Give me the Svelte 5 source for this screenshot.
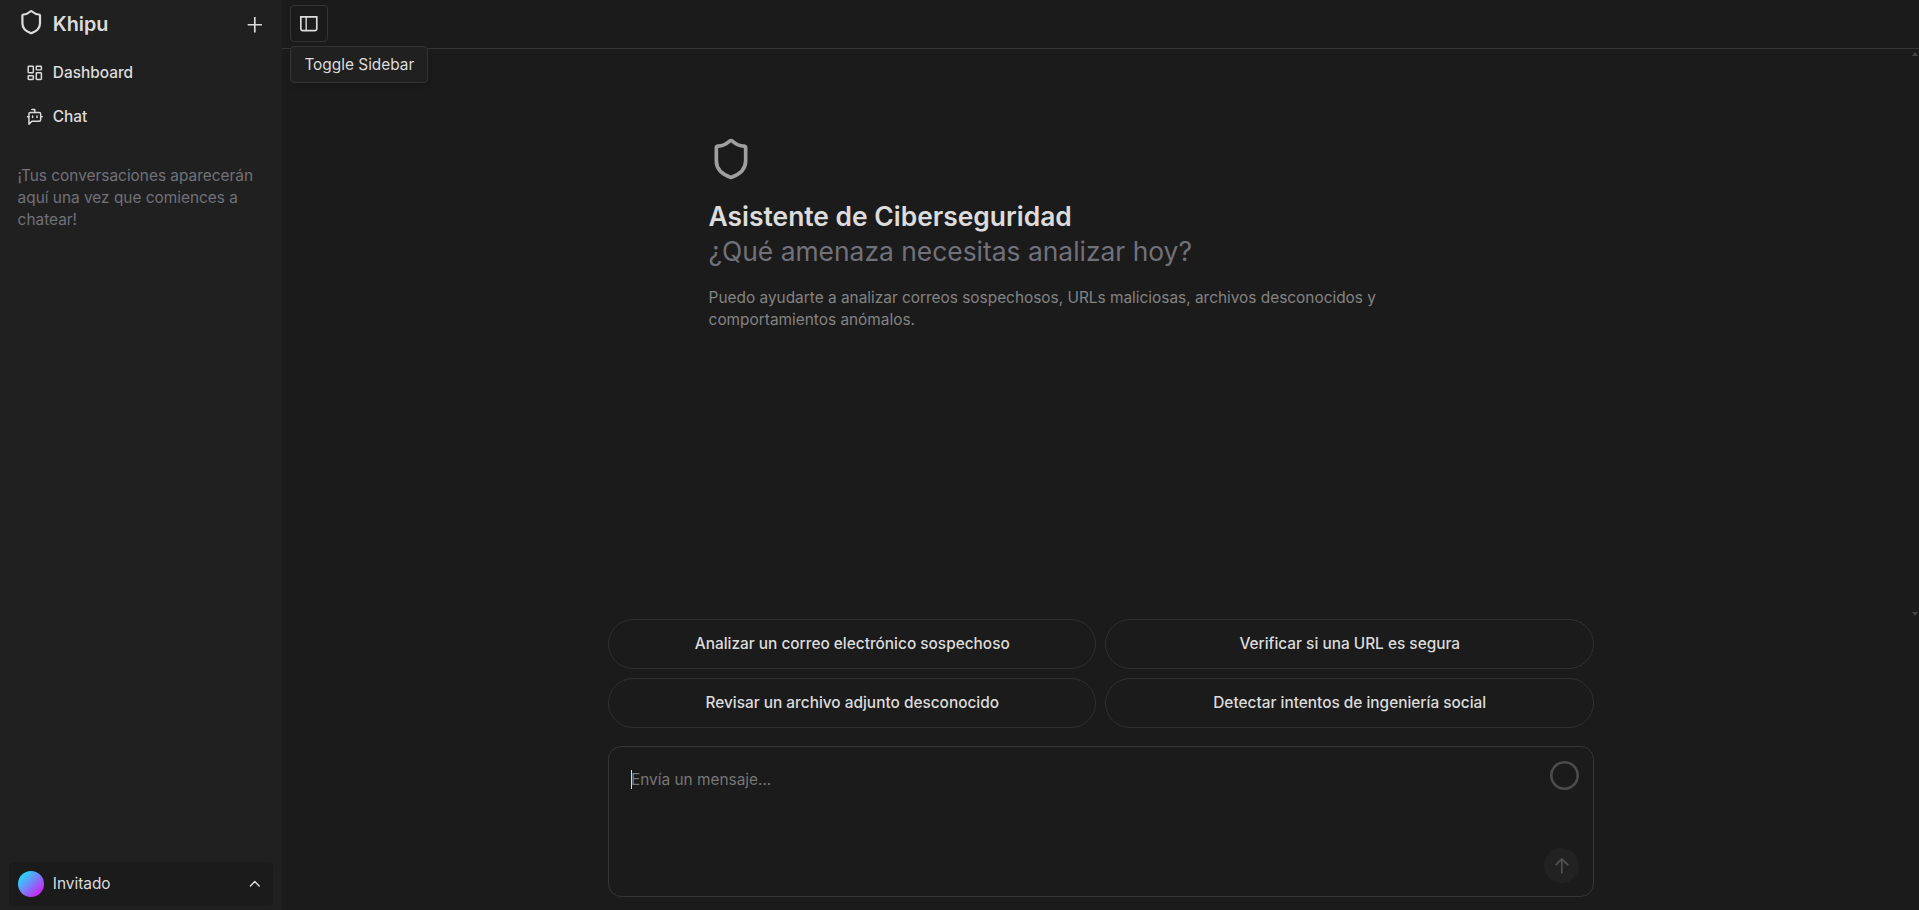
<script>
  const suggestions = [
    'Analizar un correo electrónico sospechoso',
    'Verificar si una URL es segura',
    'Revisar un archivo adjunto desconocido',
    'Detectar intentos de ingeniería social'
  ];
</script>

{#snippet shield()}
  <svg class="shield" viewBox="0 0 24 24" fill="none" stroke="currentColor" stroke-width="2" stroke-linecap="round" stroke-linejoin="round" aria-hidden="true">
    <path d="M20 13c0 5-3.5 7.5-7.66 8.95a1 1 0 0 1-.67-.01C7.5 20.5 4 18 4 13V6a1 1 0 0 1 1-1c2 0 4.5-1.2 6.24-2.72a1.17 1.17 0 0 1 1.52 0C14.51 3.81 17 5 19 5a1 1 0 0 1 1 1z" />
  </svg>
{/snippet}

<div class="layout">
  <aside class="sidebar">
    <div class="brand-row">
      <div class="brand">{@render shield()}<span>Khipu</span></div>
      <button class="plus" aria-label="Nuevo chat">
        <svg class="icon" viewBox="0 0 16 16" fill="currentColor"><path d="M8.75 1H7.25V7.25H1.5V8.75H7.25V15H8.75V8.75H14.5V7.25H8.75V1Z" /></svg>
      </button>
    </div>
    <nav>
      <a href="#dashboard">
        <svg class="icon line" viewBox="0 0 24 24"><rect width="7" height="9" x="3" y="3" rx="1" /><rect width="7" height="5" x="14" y="3" rx="1" /><rect width="7" height="9" x="14" y="12" rx="1" /><rect width="7" height="5" x="3" y="16" rx="1" /></svg>
        <span>Dashboard</span>
      </a>
      <a href="#chat">
        <svg class="icon line" viewBox="0 0 24 24"><path d="M12 6V2H8" /><path d="m8 18-4 4V8a2 2 0 0 1 2-2h12a2 2 0 0 1 2 2v8a2 2 0 0 1-2 2Z" /><path d="M2 12h2M9 11v2M15 11v2M20 12h2" /></svg>
        <span>Chat</span>
      </a>
    </nav>
    <p class="history">¡Tus conversaciones aparecerán aquí una vez que comiences a chatear!</p>
    <button class="user">
      <span class="avatar"></span>
      <span class="user-name">Invitado</span>
      <svg class="icon line" viewBox="0 0 24 24"><path d="m18 15-6-6-6 6" /></svg>
    </button>
  </aside>

  <main>
    <header>
      <div class="toggle-wrap">
        <button class="toggle" aria-label="Toggle Sidebar">
          <svg class="icon" viewBox="0 0 16 16" fill="currentColor"><path fill-rule="evenodd" clip-rule="evenodd" d="M6.245 2.5H14.5V12.5C14.5 13.0523 14.0523 13.5 13.5 13.5H6.245V2.5ZM4.995 2.5H1.5V12.5C1.5 13.0523 1.94772 13.5 2.5 13.5H4.995V2.5ZM0 1H1.5H14.5H16V2.5V12.5C16 13.8807 14.8807 15 13.5 15H2.5C1.11929 15 0 13.8807 0 12.5V2.5V1Z" /></svg>
        </button>
        <div class="tooltip" role="tooltip">Toggle Sidebar</div>
      </div>
    </header>

    <section class="messages">
      <div class="greeting">
        {@render shield()}
        <h1>Asistente de Ciberseguridad</h1>
        <h2>¿Qué amenaza necesitas analizar hoy?</h2>
        <p>Puedo ayudarte a analizar correos sospechosos, URLs maliciosas, archivos desconocidos y comportamientos anómalos.</p>
      </div>
      <div class="scroll-arrows"><i class="up"></i><i class="down"></i></div>
    </section>

    <div class="composer">
      <div class="suggestions">
        {#each suggestions as s}
          <button>{s}</button>
        {/each}
      </div>
      <div class="input">
        <div class="input-top">
          <div class="placeholder">Envía un mensaje...</div>
          <span class="ring"></span>
        </div>
        <button class="send" aria-label="Enviar">
          <svg class="icon" viewBox="0 0 16 16" fill="currentColor"><path d="M8.70711 1.39644C8.31659 1.00592 7.68342 1.00592 7.2929 1.39644L2.21968 6.46966L1.68935 6.99999L2.75001 8.06065L3.28034 7.53032L7.25001 3.56065V14.25V15H8.75001V14.25V3.56065L12.7197 7.53032L13.25 8.06065L14.3107 6.99999L13.7803 6.46966L8.70711 1.39644Z" /></svg>
        </button>
      </div>
    </div>
  </main>
</div>

<style>
  :global(html) { font-size: 17.6px; }
  :global(body) { background: #1b1b1b; overflow: hidden; }
  .layout, .layout * { box-sizing: border-box; }
  .layout {
    display: flex;
    height: 100vh;
    font: 400 0.875rem/1.25rem Inter, sans-serif;
    color: #dcdcdc;
  }
  button { font: inherit; color: inherit; background: none; border: 0; padding: 0; }
  a { color: inherit; text-decoration: none; }
  h1, h2, p { margin: 0; }
  svg { display: block; flex: none; }
  .icon { width: 1rem; height: 1rem; }
  .line { fill: none; stroke: currentColor; stroke-width: 2; stroke-linecap: round; stroke-linejoin: round; }

  .sidebar {
    width: 16rem;
    flex: none;
    display: flex;
    flex-direction: column;
    background: #202020;
    padding: 0 0.5rem 4px;
  }
  .brand-row { display: flex; justify-content: space-between; padding: 9px 9px 0 0.5rem; height: 51px; }
  .brand { display: flex; gap: 0.5rem; font-size: 1.125rem; font-weight: 600; line-height: 30px; }
  .brand .shield { width: 1.5rem; height: 1.5rem; }
  .plus { height: 31px; display: flex; align-items: center; }
  nav a { display: flex; align-items: center; gap: 0.5rem; height: 44px; padding-left: 1rem; font-weight: 500; }
  .history { color: #71717a; padding: 26px 0.5rem 0; }
  .user {
    margin-top: auto;
    height: 44px;
    display: flex;
    align-items: center;
    gap: 0.5rem;
    padding: 0 9px 0 0.5rem;
    border-radius: 5px;
    background: #1b1b1b;
    text-align: left;
  }
  .avatar { width: 1.5rem; height: 1.5rem; border-radius: 50%; background: linear-gradient(135deg, #00ffff, #f000f0); }
  .user-name { flex: 1; }

  main { flex: 1; min-width: 0; display: flex; flex-direction: column; }
  header { height: 49px; flex: none; border-bottom: 1px solid #363636; padding: 5px 0.5rem 0; }
  .toggle-wrap { position: relative; width: 37.4px; }
  .toggle {
    width: 37.4px;
    height: 37px;
    display: grid;
    place-items: center;
    border: 1px solid #343434;
    border-radius: 4px;
  }
  .tooltip {
    position: absolute;
    top: 41px;
    left: 0;
    z-index: 1;
    width: 137.4px;
    white-space: nowrap;
    padding: 7px 0 7px 13px;
    line-height: 21px;
    height: 37px;
    border: 1px solid #343434;
    border-radius: 4px;
    background: #202020;
    box-shadow: 0 4px 6px -1px rgb(0 0 0 / 0.1);
  }
  .messages { flex: 1; min-height: 0; display: flex; justify-content: space-between; }
  .greeting { padding-top: 88px; margin-left: 427px; width: 720px; }
  .greeting .shield { width: 2.5rem; height: 2.5rem; color: #a0a0a0; }
  h1, h2 { font-size: 1.5rem; line-height: 2rem; }
  h1 { font-weight: 600; margin-top: 18px; }
  h2 { font-weight: 400; color: #71717a; }
  .greeting p { margin-top: 18px; color: #838383; }
  .scroll-arrows { width: 7px; display: flex; flex-direction: column; justify-content: space-between; padding: 3px 0 3px; }
  .scroll-arrows i { border: 3px solid transparent; border-top: 0; border-bottom: 4px solid #454545; width: 6px; }
  .scroll-arrows .down { border-bottom: 0; border-top: 4px solid #454545; }

  .composer { width: 986px; margin: 0 0 13px 326.4px; }
  .suggestions { display: grid; grid-template-columns: 1fr 1fr; gap: 9px; }
  .suggestions button { height: 50px; border: 1px solid #303030; border-radius: 25px; font-weight: 500; }
  .input {
    margin-top: 18px;
    height: 151px;
    border: 1px solid #363636;
    border-radius: 0.75rem;
    padding: 14px;
    display: flex;
    flex-direction: column;
    justify-content: space-between;
  }
  .input-top { display: flex; justify-content: space-between; }
  .placeholder { margin: 9px 0 0 8px; border-left: 1px solid #dcdcdc; height: 19px; line-height: 19px; color: #777; text-indent: -1px; }
  .ring { width: 29px; height: 29px; box-shadow: inset 0 0 0 2.6px #4c4c4c; border-radius: 50%; }
  .send {
    align-self: flex-end;
    width: 35px;
    height: 35px;
    border-radius: 50%;
    background: #222;
    color: #515151;
    display: grid;
    place-items: center;
    margin-bottom: -1px;
  }
</style>
